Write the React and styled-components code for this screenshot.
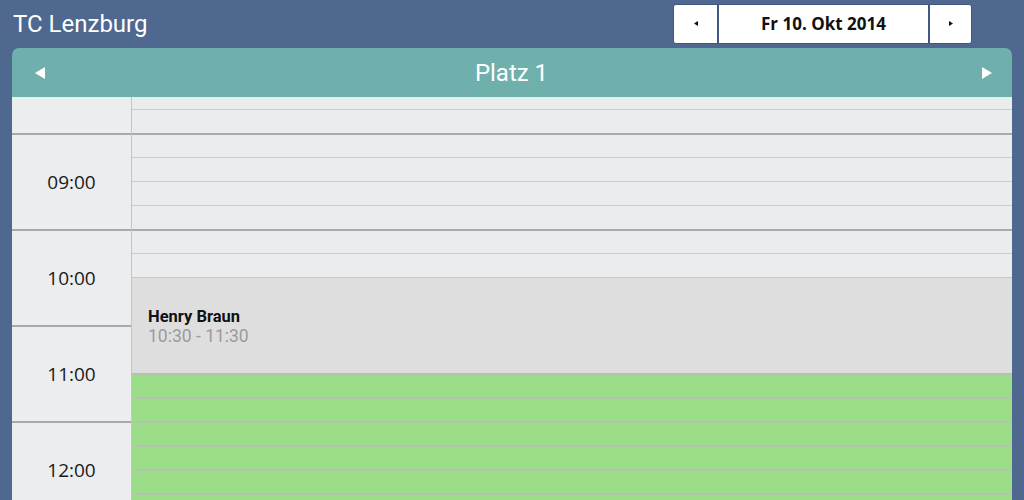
import React from 'react';
import styled, { createGlobalStyle } from 'styled-components';

const GlobalStyle = createGlobalStyle`
  html, body {
    margin: 0;
    height: 100%;
    overflow: hidden;
  }
  body {
    background: #4e6890;
    font-family: Roboto, "Liberation Sans", sans-serif;
  }
`;

const Page = styled.div`
  padding: 0 12px;
`;

const TopBar = styled.div`
  height: 48px;
  display: flex;
  align-items: center;
  justify-content: space-between;
`;

const Title = styled.h1`
  margin: 0 0 0 1px;
  font-size: 24px;
  font-weight: 400;
  color: #fff;
  line-height: 1;
`;

const DatePicker = styled.div`
  display: flex;
  height: 40px;
  margin-right: 40px;
  margin-top: -1px;
  background: #fff;
  border: 1px solid #3f5885;
  border-radius: 3px;
  box-sizing: border-box;
`;

const PickerButton = styled.button`
  width: ${(p) => p.$width}px;
  border: none;
  border-left: ${(p) => (p.$first ? 'none' : '2px solid #3f5885')};
  background: transparent;
  padding: 0;
  display: flex;
  align-items: center;
  justify-content: center;
  font-family: "Open Sans", "Liberation Sans", sans-serif;
  font-weight: 700;
  font-size: 17px;
  color: #111;
`;

const Panel = styled.div`
  border-radius: 7px 7px 0 0;
  overflow: hidden;
`;

const PanelHeader = styled.div`
  height: 49px;
  background: #6fb0ad;
  display: flex;
  align-items: center;
  padding: 0 20px 0 23px;
  color: #fff;
`;

const PanelTitle = styled.div`
  flex: 1;
  text-align: center;
  font-size: 24px;
  line-height: 1;
  margin-right: 4px;
`;

const Body = styled.div`
  display: flex;
  height: 420px;
  overflow: hidden;
`;

const TimeColumn = styled.div`
  width: 119px;
  border-right: 1px solid #c6c6c6;
  background: #ecedef;
`;

const Track = styled.div`
  margin-top: -60px;
`;

const SlotColumn = styled.div`
  flex: 1;
  background: #ebecee;
`;

const HourCell = styled.div`
  height: 96px;
  box-sizing: border-box;
  border-top: 2px solid #a9a9a9;
  display: flex;
  align-items: center;
  justify-content: center;
  font-family: "Open Sans", "Liberation Sans", sans-serif;
  font-size: 19px;
  color: #1a1a1a;
`;

const Slot = styled.div`
  height: 24px;
  box-sizing: border-box;
  border-top: ${(p) => (p.$hour || p.$free ? 2 : 1)}px solid
    ${(p) => (p.$free ? '#b3c3ac' : p.$hour ? '#a9a9a9' : '#cbcbcb')};
  background: ${(p) => (p.$free ? '#9cdd89' : '#ebecee')};
`;

const Booking = styled.div`
  height: ${(p) => p.$height}px;
  box-sizing: border-box;
  border-top: 1px solid #c8c8c8;
  background: #dedede;
  display: flex;
  flex-direction: column;
  justify-content: center;
  padding: 2px 16px 0;
`;

const BookingName = styled.div`
  font-weight: 700;
  font-size: 16.5px;
  color: #111;
  line-height: 19px;
`;

const BookingTime = styled.div`
  font-size: 17.5px;
  color: #9b9b9b;
  line-height: 20px;
`;

const Arrow = ({ dir, w, h, color }) => (
  <svg width={w} height={h} viewBox="0 0 10 12">
    {dir === 'left' ? (
      <polygon points="10,0 10,12 0,6" fill={color} />
    ) : (
      <polygon points="0,0 0,12 10,6" fill={color} />
    )}
  </svg>
);

const hours = [8, 9, 10, 11, 12];
const booking = { name: 'Henry Braun', from: 10 * 60 + 30, to: 11 * 60 + 30 };
const freeFrom = 11 * 60 + 30;

const pad = (n) => String(n).padStart(2, '0');
const fmt = (m) => `${pad(Math.floor(m / 60))}:${pad(m % 60)}`;

const buildSlots = () => {
  const items = [];
  for (let m = 8 * 60; m < 13 * 60; m += 15) {
    if (m === booking.from) {
      const len = ((booking.to - booking.from) / 15) * 24;
      items.push(
        <Booking key={m} $height={len}>
          <BookingName>{booking.name}</BookingName>
          <BookingTime>
            {fmt(booking.from)} - {fmt(booking.to)}
          </BookingTime>
        </Booking>
      );
      m = booking.to - 15;
      continue;
    }
    items.push(<Slot key={m} $hour={m % 60 === 0} $free={m >= freeFrom} />);
  }
  return items;
};

export default function App() {
  return (
    <Page>
      <GlobalStyle />
      <TopBar>
        <Title>TC Lenzburg</Title>
        <DatePicker>
          <PickerButton $first $width={43}>
            <Arrow dir="left" w={4} h={7} color="#111" />
          </PickerButton>
          <PickerButton $width={211}>Fr 10. Okt 2014</PickerButton>
          <PickerButton $width={43}>
            <Arrow dir="right" w={4} h={7} color="#111" />
          </PickerButton>
        </DatePicker>
      </TopBar>
      <Panel>
        <PanelHeader>
          <Arrow dir="left" w={10} h={12} color="#fff" />
          <PanelTitle>Platz 1</PanelTitle>
          <Arrow dir="right" w={10} h={12} color="#fff" />
        </PanelHeader>
        <Body>
          <TimeColumn>
            <Track>
              {hours.map((h) => (
                <HourCell key={h}>{h === 8 ? '' : `${pad(h)}:00`}</HourCell>
              ))}
            </Track>
          </TimeColumn>
          <SlotColumn>
            <Track>{buildSlots()}</Track>
          </SlotColumn>
        </Body>
      </Panel>
    </Page>
  );
}
